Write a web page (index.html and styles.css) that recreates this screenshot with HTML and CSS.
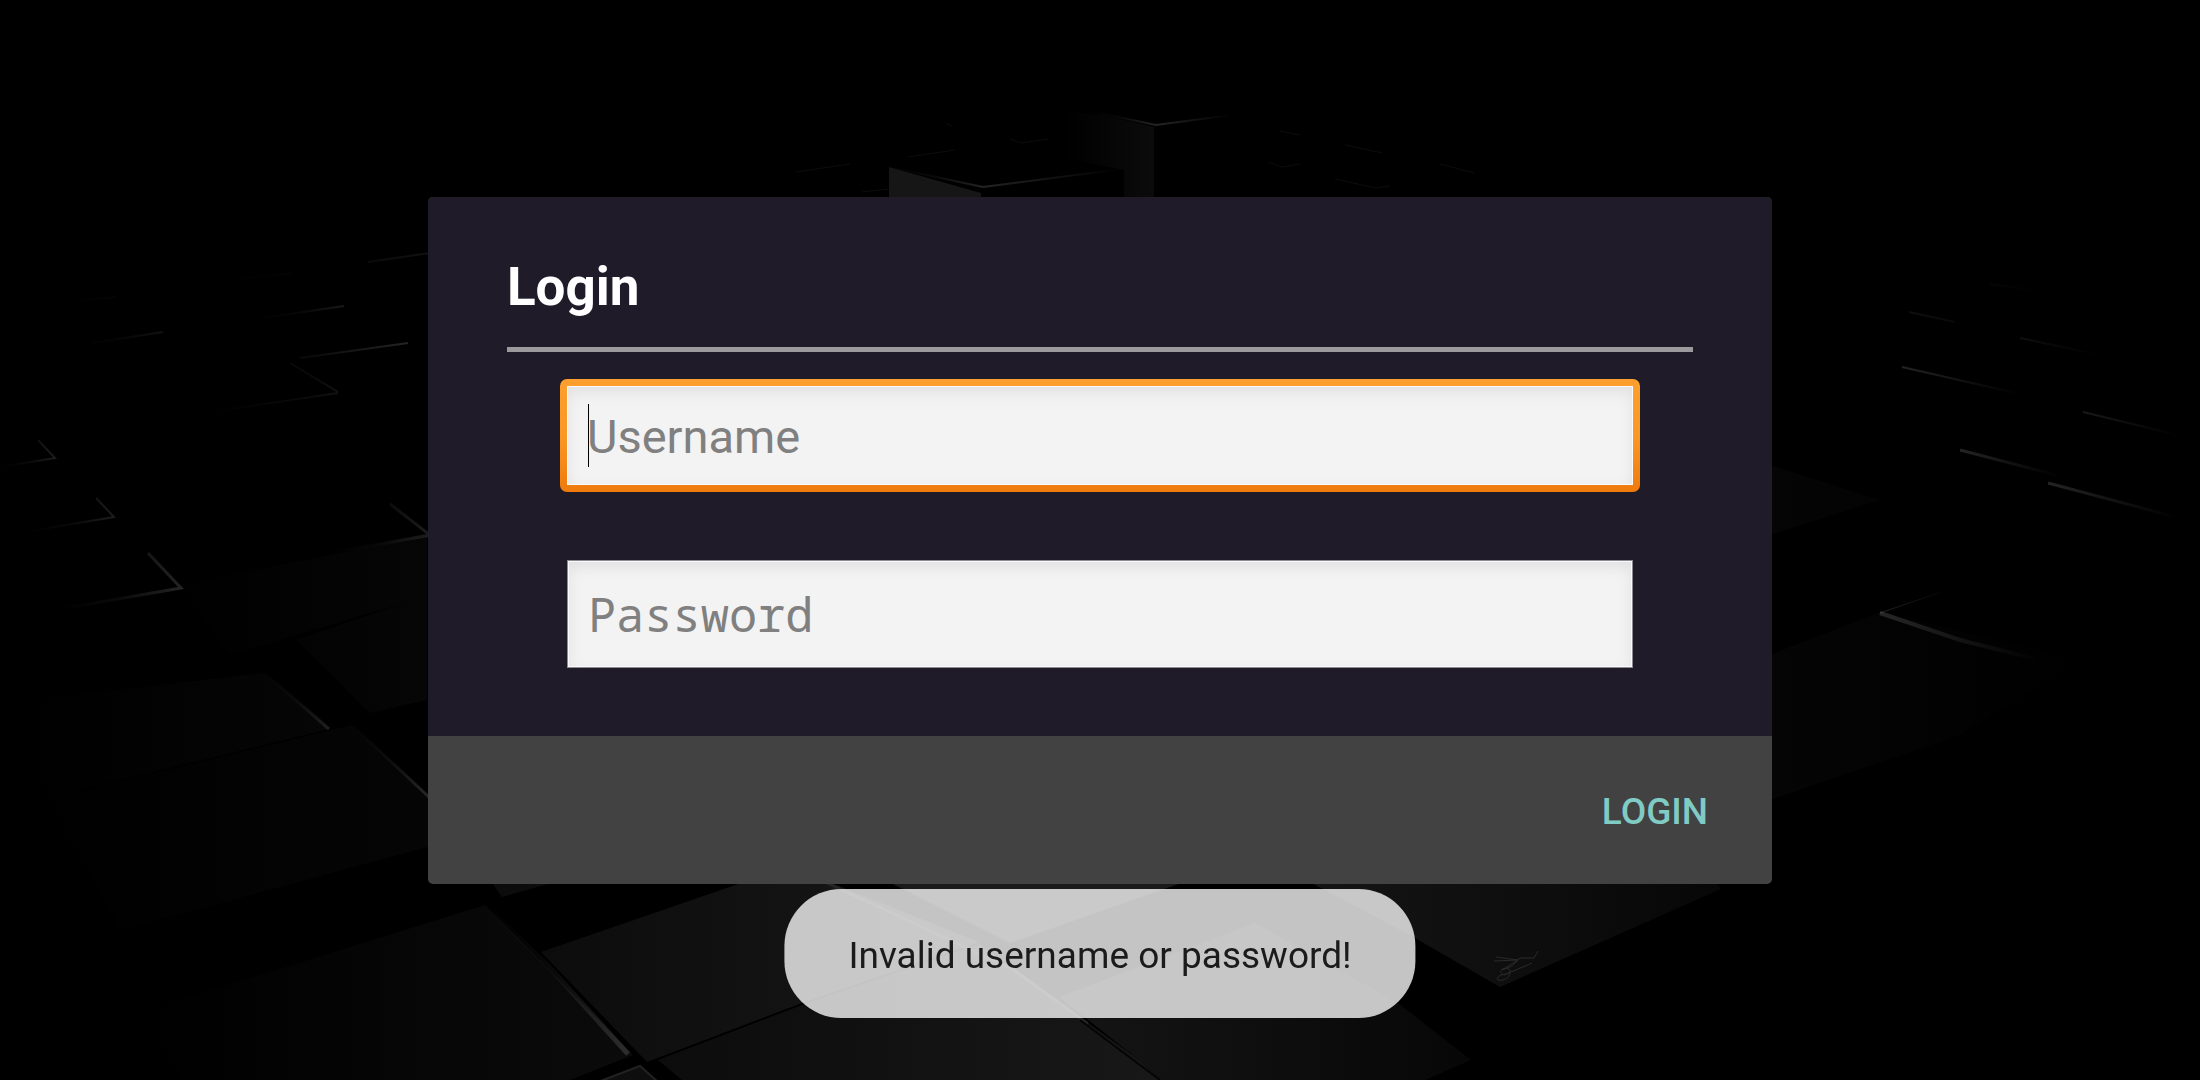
FILE: index.html
```html
<!DOCTYPE html>
<html lang="en">
<head>
    <meta charset="UTF-8">
    <meta name="viewport" content="width=device-width, initial-scale=1.0">
    <title>Login</title>
    <link rel="stylesheet" href="styles.css">
</head>
<body>
    <!-- Dark blocks wallpaper -->
    <svg class="wallpaper" viewBox="0 0 2200 1080" preserveAspectRatio="xMidYMid slice" aria-hidden="true">
        <defs>
            <linearGradient id="fadeLeft"><stop offset="0" stop-color="#fff" stop-opacity="0"/><stop offset=".5" stop-color="#fff" stop-opacity=".04"/><stop offset="1" stop-color="#fff" stop-opacity=".14"/></linearGradient>
            <linearGradient id="fadeRight"><stop offset="0" stop-color="#fff" stop-opacity=".14"/><stop offset=".5" stop-color="#fff" stop-opacity=".07"/><stop offset="1" stop-color="#fff" stop-opacity="0"/></linearGradient>
            <linearGradient id="tile"><stop offset="0" stop-color="#000"/><stop offset="1" stop-color="#0b0b0b"/></linearGradient>
            <linearGradient id="tileDim"><stop offset="0" stop-color="#000"/><stop offset="1" stop-color="#060606"/></linearGradient>
            <linearGradient id="tileLit"><stop offset="0" stop-color="#0c0c0c"/><stop offset="1" stop-color="#181818"/></linearGradient>
            <linearGradient id="tileRight"><stop offset="0" stop-color="#151515"/><stop offset="1" stop-color="#070707"/></linearGradient>
            <linearGradient id="tileFar"><stop offset="0" stop-color="#050505"/><stop offset="1" stop-color="#000"/></linearGradient>
        </defs>

        <!-- cubes behind the top of the dialog -->
        <path fill="#161616" d="M889 167 981 193V200H889z"/>
        <path fill="url(#tile)" d="M1065 112 1103 115 1154 127V200H1124V170L1065 158z"/>
        <g fill="none" stroke-width="2">
            <path stroke="url(#fadeLeft)" d="M889 167 983 187"/>
            <path stroke="url(#fadeRight)" d="M983 187 1122 169"/>
            <path stroke="url(#fadeLeft)" d="M1090 111 1156 125"/>
            <path stroke="url(#fadeRight)" d="M1156 125 1232 115"/>
        </g>

        <!-- small edges in the distance -->
        <g fill="none" stroke="#0d0d0d">
            <path d="M1010 139 1022 143 1048 139M908 157 955 150M796 172 850 164M862 192 889 189M1268 162 1282 167 1300 164M1335 179 1376 188 1390 186M1345 145 1382 153M1440 164 1474 173M1280 131 1300 135M946 123 952 126"/>
        </g>

        <!-- tiles on the left -->
        <path fill="url(#tileDim)" d="M180 585 427 536V596L230 655zM296 640 427 595V700L370 713z"/>
        <path fill="url(#tileDim)" d="M30 700 265 673 329 729 46 798z"/>
        <path fill="url(#tileDim)" d="M46 800 352 725 460 825V838L122 930z"/>
        <path fill="url(#tile)" d="M148 1010 485 905 633 1055 570 1080H180z"/>
        <g fill="none" stroke="url(#fadeLeft)" stroke-width="2">
            <path opacity=".5" d="M368 262 430 253M220 281 291 273"/>
            <path opacity=".5" d="M72 301 116 297M92 343 163 332"/>
            <path opacity=".7" d="M255 319 344 306"/>
            <path d="M300 358 408 343M210 412 338 393M290 363 338 392"/>
            <path opacity=".8" d="M0 406 6 406M0 467 55 458 38 440"/>
            <path opacity=".8" d="M24 532 114 517 96 498"/>
            <path stroke-width="3" d="M60 609 181 588 148 553"/>
            <path stroke-width="3" opacity=".8" d="M330 553 430 535 390 504"/>
            <path stroke-width="3" opacity=".8" d="M265 673 329 729"/>
            <path stroke-width="3" d="M352 725 430 798"/>
            <path stroke-width="5" d="M485 905 550 968 628 1054"/>
        </g>

        <!-- tiles along the bottom -->
        <path fill="#0c0c0c" d="M490 880H548V884L502 897z"/>
        <path fill="url(#tileLit)" d="M541 952 750 880H824L979 942 802 1003 647 1062z"/>
        <path fill="url(#tileLit)" d="M658 1060 802 1005 979 944 1139 1060 1160 1080H682z"/>
        <path fill="#1a1a1a" d="M885 880H1190L1010 943z"/>
        <path fill="url(#tileRight)" d="M1059 997 1255 923 1398 1003 1471 1060 1425 1080H1160L1139 1060z"/>
        <path fill="url(#tileRight)" d="M1306 880H1715L1721 889 1500 987 1415 938z"/>
        <path fill="none" stroke="#252525" stroke-width="3" d="M827 883 1014 970 1088 1024"/>
        <path fill="none" stroke="#050505" stroke-width="2" d="M1080 1020 1160 1080"/>
        <path fill="#0e0e0e" stroke="#222" stroke-width="2" d="M598 1082 640 1066 658 1082"/>
        <!-- signature -->
        <path fill="none" stroke="#2a2a2a" d="M1496 957 1518 960 1494 961M1518 960 1502 970 1512 966 1520 958 1534 958 1538 951M1532 963 1504 975C1496 972 1504 965 1510 970 1512 978 1500 983 1497 979 1500 972 1508 976 1509 972"/>

        <!-- tiles on the right -->
        <path fill="url(#tileFar)" d="M1770 465 1880 500 1770 535zM1770 655 1880 612 2080 660 1960 735 1770 800z"/>
        <g fill="none" stroke="url(#fadeRight)" stroke-width="2">
            <path d="M1902 367 2020 394"/>
            <path opacity=".4" d="M1909 312 1955 322M1990 284 2040 291"/>
            <path opacity=".4" d="M2020 338 2100 355"/>
            <path opacity=".7" d="M2083 412 2182 436"/>
            <path stroke-width="3" d="M1960 450 2060 476"/>
            <path stroke-width="3" d="M2048 483 2180 518"/>
            <path stroke-width="4" d="M1880 613 1960 640 2040 660"/>
            <path stroke-width="1" d="M1880 613 1950 589"/>
        </g>
    </svg>

    <main class="screen">
        <form class="dialog" id="loginForm">
            <div class="dialog-body">
                <h1 class="dialog-title">Login</h1>
                <div class="fields">
                    <input class="input-field focused" type="text" id="username" name="username" placeholder="Username" aria-label="Username">
                    <input class="input-field password" type="password" id="password" name="password" placeholder="Password" aria-label="Password">
                </div>
            </div>
            <div class="dialog-actions">
                <button type="submit" class="button">LOGIN</button>
            </div>
        </form>
        <div class="toast" role="status">Invalid username or password!</div>
    </main>
</body>
</html>
```
FILE: styles.css
```css
* {
    box-sizing: border-box;
}
body {
    margin: 0;
    background: #000;
    font-family: Roboto, sans-serif;
}
.wallpaper {
    position: fixed;
    inset: 0;
    width: 100%;
    height: 100%;
}
.screen {
    position: relative;
    min-height: 100vh;
    display: flex;
    align-items: center;
    justify-content: center;
}
.dialog {
    width: 61.1%;
    border-radius: 5px;
    overflow: hidden;
    background: #424242;
}
.dialog-body {
    padding: 58px 79px 68px;
    background: #201b28;
}
.dialog-title {
    margin: 0 0 27px;
    padding-bottom: 28px;
    border-bottom: 5px solid #9c9a9d;
    color: #fff;
    font-size: 53px;
    font-weight: 700;
    line-height: 64px;
}
.fields {
    display: flex;
    flex-direction: column;
    padding: 0 53px;
}
.input-field {
    height: 108px;
    padding: 0 20px;
    border: 1px solid #8d8a92;
    border-radius: 0;
    outline: none;
    background: #f3f3f3;
    box-shadow: inset 0 0 0 1px #fafafa, inset 0 6px 16px rgba(0, 0, 0, 0.08);
    color: #000;
    font-family: Roboto, sans-serif;
    font-size: 47px;
}
.input-field::placeholder {
    color: #808080;
    opacity: 1;
}
/* orange frame and text cursor */
.input-field.focused {
    height: 113px;
    margin-bottom: 68px;
    padding-top: 2px;
    border: 7px solid transparent;
    border-radius: 7px;
    background:
        linear-gradient(#000, #000) 21px center / 1px 63px no-repeat padding-box,
        linear-gradient(#f3f3f3, #f3f3f3) padding-box,
        linear-gradient(#fd9f2e, #fa9826 50%, #ef7a0c) border-box;
    caret-color: transparent;
}
.input-field.password {
    margin: 0 7px;
    font-family: "Droid Sans Mono", "Noto Sans Mono", "DejaVu Sans Mono", monospace;
}
.dialog-actions {
    display: flex;
    justify-content: flex-end;
    padding: 26px 42px 22px;
}
.button {
    height: 100px;
    padding: 0 22px;
    border: none;
    background: transparent;
    color: #80cbc4;
    font-family: Roboto, sans-serif;
    font-size: 37px;
    font-weight: 500;
    cursor: pointer;
}
.toast {
    position: absolute;
    bottom: 62px;
    left: 50%;
    transform: translateX(-50%);
    padding: 42px 64px 38px;
    border-radius: 57px;
    background: rgba(255, 255, 255, 0.77);
    color: #1b1b1b;
    font-size: 37px;
    line-height: 49px;
    white-space: nowrap;
}
```
